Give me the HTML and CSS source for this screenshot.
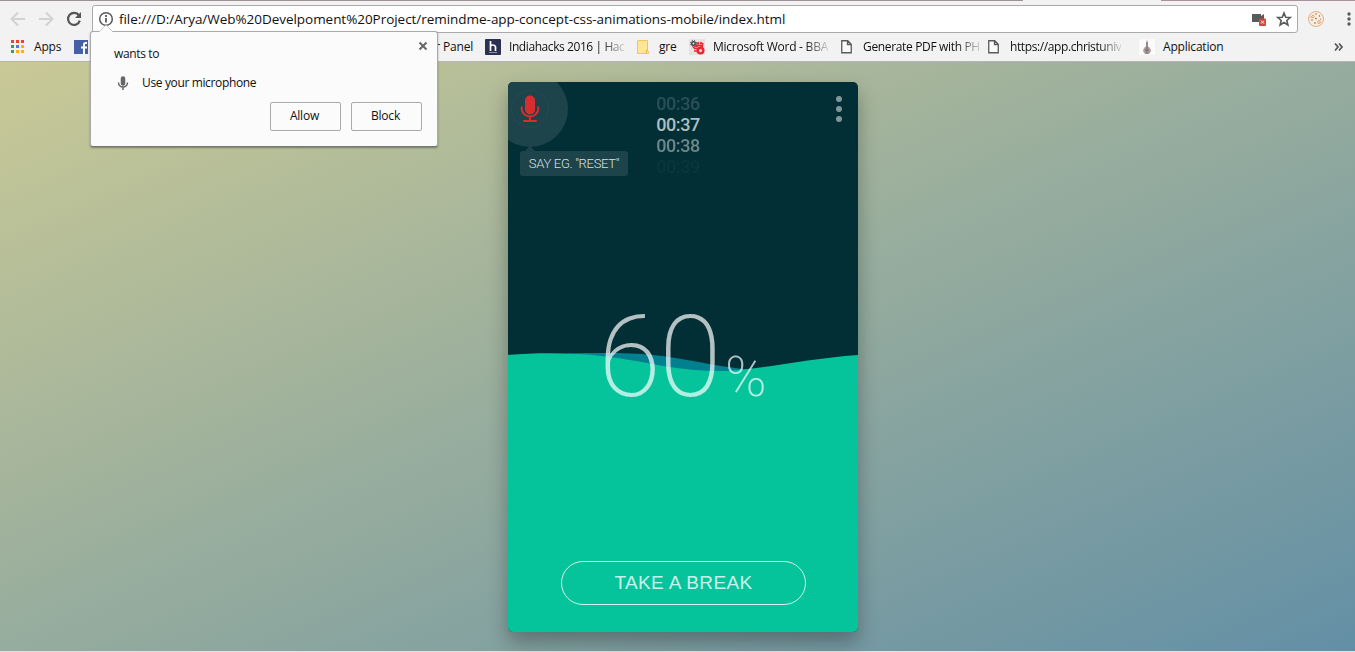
FILE: index.html
```html
<!DOCTYPE html>
<html lang="en">
<head>
<meta charset="utf-8">
<title>RemindMe</title>
<link rel="stylesheet" href="styles.css">
</head>
<body>
<div class="window">
  <header class="chrome">
    <div class="tab-edge"><span class="tab-left"></span><span class="tab-active"></span><span class="tab-right"></span></div>
    <div class="toolbar">
      <svg class="nav" width="84" height="28" viewBox="0 0 84 28" fill="none">
        <path d="M25 14H12M18 7.500l-6.500 6.500 6.500 6.500" stroke="#d2d2d2" stroke-width="2"/>
        <path d="M39 14h13M46 7.500l6.500 6.500-6.500 6.500" stroke="#d2d2d2" stroke-width="2"/>
        <path d="M79 10.500a6 6 0 1 0 .8 5.200" stroke="#555" stroke-width="2.200"/>
        <path d="M81 7v6h-6z" fill="#555"/>
      </svg>
      <div class="omnibox">
        <svg class="info" width="16" height="16" viewBox="0 0 16 16" fill="none" stroke="#5a5a5a"><circle cx="8" cy="8" r="6.300" stroke-width="1.500"/><path d="M8 7v4.500M8 4v2" stroke-width="1.800"/></svg>
        <span class="url">file:///D:/Arya/Web%20Develpoment%20Project/remindme-app-concept-css-animations-mobile/index.html</span>
        <svg class="camera" width="16" height="16" viewBox="0 0 16 16"><path d="M1 3h9v2l3-2v8H1z" fill="#5a5a5a"/><rect x="8" y="7.500" width="7" height="7.500" rx="1" fill="#db4437"/><path d="M10 9.700l3 3m0-3l-3 3" stroke="#fff"/></svg>
        <svg class="star" width="16" height="16" viewBox="0 0 16 16"><path d="M8 2l1.700 4.200 4.600.3-3.500 3 1.100 4.500L8 11.500 4.100 14l1.100-4.500-3.500-3 4.600-.3z" fill="none" stroke="#5a5a5a" stroke-width="1.600"/></svg>
      </div>
      <svg class="cookie" width="18" height="18" viewBox="0 0 18 18"><circle cx="9" cy="9" r="7.500" fill="#f8ede1" stroke="#e5af7e"/><g fill="none" stroke="#e5a56d"><circle cx="6" cy="6.500" r="1.200"/><circle cx="12" cy="12" r="1.400"/></g><g fill="#8b5a3c"><circle cx="9" cy="4" r=".7"/><circle cx="12.500" cy="6" r=".7"/><circle cx="9" cy="8.500" r=".8"/><circle cx="13.500" cy="9" r=".6"/><circle cx="5" cy="10" r=".7"/><circle cx="8" cy="13" r=".8"/><circle cx="4" cy="7" r=".5"/></g></svg>
      <svg class="more" width="4" height="14" viewBox="0 0 4 14" fill="#5a5a5a"><circle cx="2" cy="2" r="1.700"/><circle cx="2" cy="7" r="1.700"/><circle cx="2" cy="12" r="1.700"/></svg>
    </div>
    <nav class="bookmarks">
      <div class="bookmark apps">
        <svg width="16" height="16" viewBox="0 0 16 16"><path d="M2 1h3v3H2zm5 0h3v3H7zm5 0h3v3h-3z" fill="#ea4335"/><path d="M2 6h3v3H2zM2 11h3v3H2z" fill="#34a05a"/><path d="M7 6h3v3H7z" fill="#3b82f0"/><path d="M12 6h3v3h-3zM7 11h3v3H7zm5 0h3v3h-3z" fill="#fbb00c"/></svg><span>Apps</span>
      </div>
      <div class="bookmark facebook">
        <svg width="16" height="16" viewBox="0 0 16 16"><rect x="1" y="1" width="14" height="14" fill="#4660a5"/><path d="M14 4h-1.500Q11 4 11 5.700V15M8 8.500h6" stroke="#fff" stroke-width="2" fill="none"/></svg><span>r Panel</span>
      </div>
      <div class="bookmark hacks">
        <svg width="16" height="16" viewBox="0 0 16 16"><rect width="16" height="16" rx="1" fill="#2a3151"/><path d="M5.500 2v10M5.500 7.500q0-1.500 2.300-1.500T10.500 8v4" fill="none" stroke="#fff" stroke-width="1.700"/><path d="M4 13.500h8" stroke="#8f94a8"/></svg><span class="fade">Indiahacks 2016 | Hac</span>
      </div>
      <div class="bookmark folder">
        <svg width="16" height="16" viewBox="0 0 16 16"><path d="M2.500 1.500h10v10l1 1v2h-11z" fill="#ffe597" stroke="#edc75c"/><path d="M11.500 14v-3h1.500" fill="none" stroke="#e6b840"/></svg><span>gre</span>
      </div>
      <div class="bookmark word">
        <svg width="16" height="16" viewBox="0 0 16 16"><rect width="16" height="16" fill="#e7e2e2"/><circle cx="4.500" cy="4.500" r="1.800" fill="none" stroke="#444" stroke-width="1.400"/><circle cx="4.500" cy="4.500" r="3" fill="none" stroke="#444" stroke-dasharray="1.200 1.200"/><circle cx="10.500" cy="6.500" r="2.500" fill="none" stroke="#e52a33" stroke-width="2.500" stroke-dasharray="2 1"/><circle cx="11.500" cy="11.500" r="2.800" fill="none" stroke="#e52a33" stroke-width="2.500"/><path d="M4 9l4-3 5 1 1-3M5 12h4M5 9.500h3" stroke="#e52a33" stroke-width="1.500" fill="none"/></svg><span class="fade">Microsoft Word - BBA</span>
      </div>
      <div class="bookmark pdf">
        <svg width="16" height="16" viewBox="0 0 16 16"><path d="M2.750 1.750h6l3.500 3.500v8.500h-9.500zM8.500 2v3.500h3.500" fill="#fafafa" stroke="#5a5a5a" stroke-width="1.300"/></svg><span class="fade">Generate PDF with PH</span>
      </div>
      <div class="bookmark christ">
        <svg width="16" height="16" viewBox="0 0 16 16"><path d="M2.750 1.750h6l3.500 3.500v8.500h-9.500zM8.500 2v3.500h3.500" fill="#fafafa" stroke="#5a5a5a" stroke-width="1.300"/></svg><span class="fade">https://app.christuniv</span>
      </div>
      <div class="bookmark application">
        <svg width="16" height="16" viewBox="0 0 16 16"><rect width="16" height="16" fill="#fafafa"/><path d="M8 0l1 5-.3 2L11 9l1 3-2 3H6l-2-3 1-3 2.300-2L7 5z" fill="#a89c9c"/><path d="M8 3v12M6 11h4" stroke="#756a6e"/></svg><span>Application</span>
      </div>
      <svg class="overflow" width="12" height="10" viewBox="0 0 12 10" fill="none" stroke="#555" stroke-width="1.700"><path d="M2 1.500L5 5 2 8.500M6 1.500L9 5 6 8.500"/></svg>
    </nav>
  </header>

  <main class="page">
    <section class="phone">
      <svg class="waves" viewBox="0 0 350 550">
        <path d="M60 271.500C95 270.500 125 271 145 273C175 276 205 284 240 287.500V310H60z" fill="#028090"/>
        <path d="M0 273C30 270.500 65 270.500 98 274.500C120 277 140 281.500 158 284.500C180 288 200 289.300 218 289C260 286.500 300 276.500 350 273V550H0z" fill="#05c49c"/>
      </svg>
      <div class="voice">
        <span class="ring"></span>
        <svg width="20" height="28" viewBox="0 0 20 28" fill="none" stroke="#d92c2f"><path d="M10 5.500v9" stroke-width="10" stroke-linecap="round"/><path d="M1.700 11.500v2.500a8.300 7.500 0 0 0 16.600 0v-2.500M10 21.500v5" stroke-width="2"/><path d="M4 26h12" stroke-width="2" stroke-linecap="round"/></svg>
      </div>
      <div class="tip">SAY EG. "RESET"</div>
      <div class="timer"><span class="previous">00:36</span><span class="current">00:37</span><span class="next">00:38</span><span class="last">00:39</span></div>
      <div class="menu"><i></i><i></i><i></i></div>
      <div class="percent"><span class="number">60</span><span class="sign">%</span></div>
      <button class="break">TAKE A BREAK</button>
    </section>
  </main>

  <aside class="permission">
    <svg class="pointer" width="14" height="8" viewBox="0 0 14 8"><path d="M0 8L7 1l7 7" fill="#fbfbfb" stroke="#bbb" stroke-width=".8"/></svg>
    <svg class="close" width="10" height="10" viewBox="0 0 10 10"><path d="M1.500 1.500l7 7m0-7l-7 7" stroke="#666" stroke-width="2"/></svg>
    <p class="wants">wants to</p>
    <p class="request"><svg width="12" height="16" viewBox="0 0 12 16" fill="none" stroke="#666"><path d="M6 3.500v5" stroke-width="4.500" stroke-linecap="round"/><path d="M1.500 7.500a4.500 4.500 0 0 0 9 0M6 12v3" stroke-width="1.500"/></svg><span>Use your microphone</span></p>
    <div class="actions"><button>Allow</button><button>Block</button></div>
  </aside>
</div>
</body>
</html>
```
FILE: styles.css
```css
* { box-sizing: border-box; }
body { margin: 0; font: 12px/16px "Open Sans", "Noto Sans", sans-serif; color: #111; }
button { font: inherit; color: inherit; }
.window { position: relative; width: 1355px; height: 652px; overflow: hidden; display: flex; flex-direction: column; background: #dce1e3; }

/* Browser chrome */
.chrome { height: 62px; flex: none; background: #f2f2f2; border-bottom: 1px solid #b6b4b9; }
.tab-edge { display: flex; height: 1px; }
.tab-left { width: 1023px; background: #9b9098; }
.tab-active { width: 138px; }
.tab-right { flex: 1; background: #aa929c; }
.toolbar { display: flex; align-items: center; height: 36px; }
.nav { flex: none; margin-right: 8px; }
.omnibox { display: flex; align-items: center; flex: none; width: 1206px; height: 28px; padding: 0 5px; border: 1px solid #aaa; border-radius: 3px; background: #fff; }
.info { flex: none; margin-right: 5px; }
.url { flex: 1; font-size: 13.5px; white-space: nowrap; letter-spacing: -.04px; }
.camera { margin-right: 9px; }
.cookie { margin-left: 9px; flex: none; }
.more { margin-left: 22px; flex: none; }
.bookmarks { display: flex; align-items: center; height: 20px; padding-left: 9px; white-space: nowrap; }
.bookmark { display: flex; align-items: center; gap: 8px; flex: none; letter-spacing: -.2px; }
.bookmark svg { flex: none; }
.apps { width: 64px; gap: 9px; }
.facebook { width: 412px; }
.facebook span { width: 376px; text-align: right; }
.hacks { width: 150px; letter-spacing: -.42px; }
.folder { width: 54px; }
.word { width: 150px; letter-spacing: -.24px; }
.pdf { width: 147px; letter-spacing: -.34px; }
.christ { width: 153px; letter-spacing: -.4px; }
.application { width: 194px; }
.fade { -webkit-mask-image: linear-gradient(90deg, #000 80%, rgba(0,0,0,.15)); mask-image: linear-gradient(90deg, #000 80%, rgba(0,0,0,.15)); }

/* Permission bubble */
.permission { position: absolute; left: 90px; top: 31px; width: 348px; height: 116px; padding: 14px 15px 0 23px; background: #fbfbfb; border: 1px solid #aaa; border-bottom-color: #777; border-radius: 3px; box-shadow: 0 1px 2px rgba(0,0,0,.35); }
.permission p { margin: 0; letter-spacing: -.36px; }
.pointer { position: absolute; left: 8px; top: -8px; }
.close { position: absolute; right: 9px; top: 9px; }
.request { display: flex; align-items: center; gap: 13px; padding: 13px 0 0 3px; }
.actions { display: flex; justify-content: flex-end; gap: 10px; margin-top: 11px; }
.actions button { width: 71px; height: 29px; padding: 0 2px 2px 0; border: 1px solid #aaa; border-radius: 2px; background: #fbfbfb; letter-spacing: -.2px; }

/* App */
.page { display: flex; align-items: flex-start; height: 589px; flex: none; padding: 20px 0 0 508px; background: linear-gradient(156.500deg, #c9c996 0%, #638fa5 100%); }
.phone { position: relative; display: flex; flex-direction: column; align-items: center; width: 350px; height: 550px; overflow: hidden; border-radius: 5px; background: #022f35; color: rgba(255,255,255,.7); box-shadow: 0 10px 20px rgba(0,0,0,.3); }
.waves { position: absolute; inset: 0; width: 350px; height: 550px; }
.voice { position: absolute; left: -16px; top: -11px; width: 76px; height: 76px; border-radius: 50%; background: #1d444a; display: grid; place-items: center; }
.ring { position: absolute; width: 38px; height: 38px; border: 1px solid #274a50; border-radius: 50%; }
.voice svg { position: relative; }
.tip { position: absolute; left: 12px; top: 69px; width: 108px; height: 25px; border-radius: 3px; background: #1d444a; font: 300 13px/25px Roboto, sans-serif; letter-spacing: -.3px; text-align: center; white-space: nowrap; color: rgba(255,255,255,.85); }
.tip::before { content: ""; position: absolute; left: 5px; top: -5px; border: solid transparent; border-width: 0 5px 5px; border-bottom-color: #1d444a; }
.timer { position: relative; display: flex; flex-direction: column; margin: 11px 10px 0 0; font: 500 18px/21px Roboto, sans-serif; letter-spacing: -.4px; }
.previous { opacity: .22; }
.next { opacity: .6; }
.last { opacity: .04; }
.menu { position: absolute; right: 16px; top: 14px; display: grid; gap: 4px; }
.menu i { width: 6px; height: 6px; border-radius: 50%; background: #81979a; }
.percent { position: relative; display: flex; align-items: baseline; margin-top: 112px; margin-left: -1px; font-family: Roboto, sans-serif; font-weight: 200; }
.number { font-size: 113px; line-height: 137px; letter-spacing: -1.500px; }
.sign { margin-left: 5px; font-size: 56px; }
.break { position: absolute; left: 53px; top: 479px; width: 245px; height: 44px; border: 1px solid rgba(255,255,255,.8); border-radius: 22px; background: none; font: 19px "Liberation Sans", sans-serif; letter-spacing: .35px; color: rgba(255,255,255,.8); }
```
